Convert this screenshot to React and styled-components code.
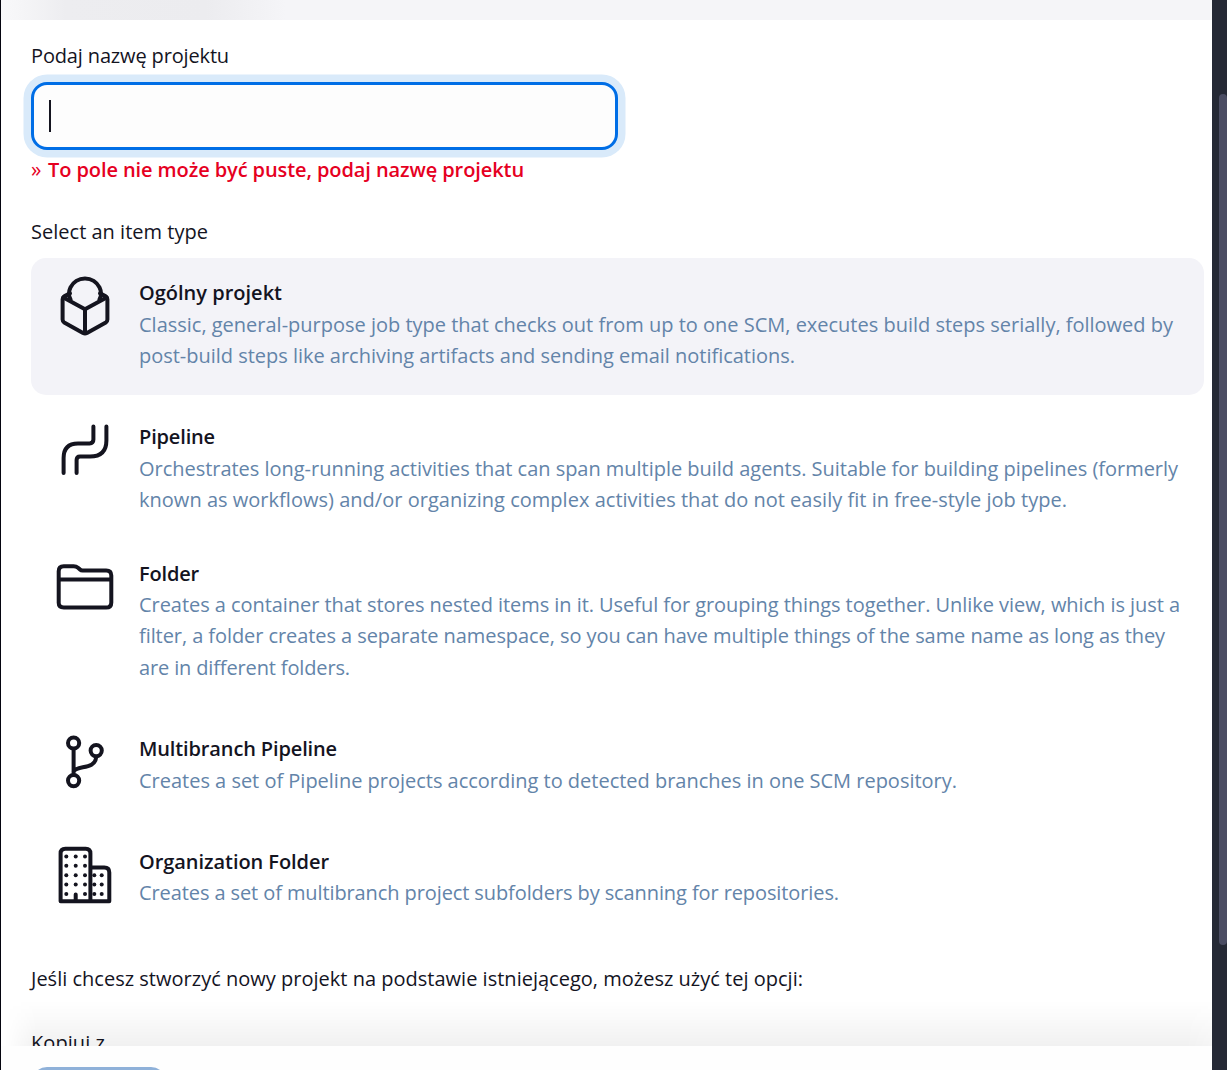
import React, { useLayoutEffect, useRef } from "react";
import styled, { createGlobalStyle } from "styled-components";

const Global = createGlobalStyle`
  * { box-sizing: border-box; }
  body { margin: 0; background: #252935; overflow: hidden; }
`;

const Window = styled.div`
  display: flex;
  width: 1227px;
  height: 1070px;
  overflow: hidden;
  background: #252935;
  font-family: "Open Sans", "Noto Sans", sans-serif;
  font-size: 20px;
  line-height: 31.3px;
  color: #14141f;
`;

const Page = styled.div`
  display: flex;
  flex-direction: column;
  width: 1212px;
  height: 1070px;
  border-left: 1px solid #05050f;
  background: #fff;
`;

const Header = styled.div`
  flex: none;
  height: 20px;
  background: linear-gradient(90deg, #f8f8fa 0, #f5f5f7 22px, #ededf0 65px, #ececef 205px, #f0f0f3 240px, #f5f5f8 285px);
`;

const Body = styled.main`
  position: relative;
  flex: none;
  display: flex;
  flex-direction: column;
  height: 1026px;
  padding: 20px 8px 0 30px;
  overflow: hidden;
`;

const Line = styled.span`
  display: block;
  width: max-content;
  white-space: pre;
`;

const Label = styled.div`
  flex: none;
  height: 31px;
  margin-top: ${(p) => p.$before || 0}px;
  margin-bottom: ${(p) => p.$after || 0}px;
`;

const NameField = styled.div`
  flex: none;
  display: flex;
  align-items: center;
  width: 587px;
  height: 68px;
  padding-left: 15px;
  border: 3px solid #006ee6;
  border-radius: 16px;
  background: #fdfdfd;
  box-shadow: 0 0 0 7.5px #d9eafa;
`;

const Caret = styled.i`
  width: 2px;
  height: 32px;
  background: #14141f;
`;

const ErrorText = styled.div`
  flex: none;
  display: flex;
  height: 31px;
  margin: 4px 0 31px;
  font-weight: 600;
  color: #e6001f;
`;

const Marker = styled.span`
  width: 17px;
  font-size: 21px;
  font-weight: 400;
`;

const Items = styled.ul`
  flex: none;
  display: flex;
  flex-direction: column;
  margin: 0;
  padding: 0;
  list-style: none;
`;

const Item = styled.li`
  display: flex;
  height: ${(p) => p.$height}px;
  margin-bottom: ${(p) => (p.$selected ? 7 : 0)}px;
  padding-top: 19px;
  border-radius: 15px;
  background: ${(p) => (p.$selected ? "#f3f3f8" : "transparent")};
`;

const IconBox = styled.div`
  flex: none;
  width: 108px;
  margin-top: -2px;
  padding-left: 23px;
  svg { display: block; overflow: visible; }
`;

const Title = styled.div`
  height: ${(p) => p.$height}px;
  font-weight: 600;
`;

const Description = styled.div`
  color: #6384a9;
`;

const BottomShade = styled.div`
  position: absolute;
  left: 0;
  right: 0;
  bottom: 0;
  height: 46px;
  background: linear-gradient(rgba(0, 0, 0, 0), rgba(0, 0, 0, 0.02) 40%, rgba(0, 0, 0, 0.055));
  mask-image: linear-gradient(90deg, transparent 4px, #000 36px, #000 1185px, rgba(0, 0, 0, 0.7));
`;

const Footer = styled.div`
  flex: 1;
  padding: 21px 0 0 31px;
  overflow: hidden;
  background: #fefefe;
`;

const OkButton = styled.div`
  width: 134px;
  height: 46px;
  border-radius: 15px;
  background: #8fb1d9;
`;

const Gutter = styled.div`
  display: flex;
  justify-content: flex-end;
  width: 15px;
  padding-top: 94px;
`;

const Thumb = styled.div`
  width: 8px;
  height: 851px;
  border-radius: 4px;
  background: #4b4d63;
`;

const Svg = ({ children }) => (
  <svg width="62" height="62" viewBox="0 0 62 62" fill="none" stroke="#14141f" strokeWidth="4" strokeLinecap="round" strokeLinejoin="round">
    {children}
  </svg>
);

const dots = [];
[12.3, 21.7, 31].forEach((x) =>
  [12.4, 21.8, 31.2, 40.6, 50].forEach((y) => {
    if (!(x === 21.7 && y === 50)) dots.push([x, y]);
  })
);
[40.3, 47.7].forEach((x) => [31.2, 40.6, 50].forEach((y) => dots.push([x, y])));

const icons = {
  project: (
    <Svg>
      <path d="M16 18.4L10.2 21.4Q8.6 22.4 8.6 24.3V44.6Q8.6 46.5 10.2 47.5L29 57.9Q31 58.9 33 57.9L51.8 47.5Q53.4 46.5 53.4 44.6V24.3Q53.4 22.4 51.8 21.4L46 18.4" />
      <path d="M9.4 22.4L31 34.3L52.6 22.4M31 34.3V58" />
      <path d="M16.6 24.5C14.5 21 14.6 16.4 16.5 12.4C19.1 7 24.7 3.4 31 3.4S42.9 7 45.5 12.4C47.4 16.4 47.5 21 45.4 24.5" />
    </Svg>
  ),
  pipeline: (
    <Svg>
      <path d="M39.4 7.4V20.6Q39.4 24.4 35.6 24.4H24Q9.6 24.4 9.6 39V54M52.4 7.4V21.4Q52.4 37.4 36 37.4H26Q22.6 37.4 22.6 41V54" />
    </Svg>
  ),
  folder: (
    <Svg>
      <path d="M4.7 46.8V15.3Q4.7 10.3 9.7 10.3H19.6Q22.2 10.3 24 11.8L25.9 13.4Q27 14.4 28.6 14.4H52.2Q57.3 14.4 57.3 19.5V46.4Q57.3 51.5 52.2 51.5H9.8Q4.7 51.5 4.7 46.8M5 23.4H57" />
    </Svg>
  ),
  branch: (
    <Svg>
      <circle cx="19.6" cy="12" r="5.6" />
      <circle cx="42.2" cy="19.6" r="5.6" />
      <circle cx="19.6" cy="49.6" r="5.6" />
      <path d="M19.6 18V43M19.6 40.5C22.5 33.5 41 39.5 42.2 26" />
    </Svg>
  ),
  organization: (
    <Svg>
      <path d="M36.4 57.3H6.6V9.4Q6.6 4.7 11.4 4.7H31.7Q36.4 4.7 36.4 9.4V57.3H55.3V28.5Q55.3 23.6 50.3 23.6H37M21.7 50.4V57" />
      {dots.map(([x, y]) => (
        <circle key={`${x}-${y}`} cx={x} cy={y} r="2" fill="#14141f" stroke="none" />
      ))}
    </Svg>
  ),
};

const items = [
  { icon: "project", height: 137, selected: true, title: ["Ogólny projekt", 143], lines: [
    ["Classic, general-purpose job type that checks out from up to one SCM, executes build steps serially, followed by", 1034],
    ["post-build steps like archiving artifacts and sending email notifications.", 656]] },
  { icon: "pipeline", height: 137, title: ["Pipeline", 76], lines: [
    ["Orchestrates long-running activities that can span multiple build agents. Suitable for building pipelines (formerly", 1039],
    ["known as workflows) and/or organizing complex activities that do not easily fit in free-style job type.", 928]] },
  { icon: "folder", height: 175, titleHeight: 31, title: ["Folder", 60], lines: [
    ["Creates a container that stores nested items in it. Useful for grouping things together. Unlike view, which is just a", 1041],
    ["filter, a folder creates a separate namespace, so you can have multiple things of the same name as long as they", 1026],
    ["are in different folders.", 211]] },
  { icon: "branch", height: 113, title: ["Multibranch Pipeline", 198], lines: [
    ["Creates a set of Pipeline projects according to detected branches in one SCM repository.", 818]] },
  { icon: "organization", height: 113, titleHeight: 31, title: ["Organization Folder", 190], lines: [
    ["Creates a set of multibranch project subfolders by scanning for repositories.", 700]] },
];

// Tracks a line so that it fills its measure exactly.
function Fit({ text, width }) {
  const ref = useRef(null);
  useLayoutEffect(() => {
    const el = ref.current;
    el.style.letterSpacing = "0px";
    const natural = el.getBoundingClientRect().width;
    el.style.letterSpacing = `${(width - natural) / text.length}px`;
  }, [text, width]);
  return <Line ref={ref}>{text}</Line>;
}

export default function App() {
  return (
    <Window>
      <Global />
      <Page>
        <Header />
        <Body>
          <Label $after={11}><Fit text="Podaj nazwę projektu" width={198} /></Label>
          <NameField><Caret /></NameField>
          <ErrorText>
            <Marker>»</Marker>
            <Fit text="To pole nie może być puste, podaj nazwę projektu" width={476} />
          </ErrorText>
          <Label $after={11}><Fit text="Select an item type" width={177} /></Label>
          <Items>
            {items.map((it) => (
              <Item key={it.icon} $height={it.height} $selected={it.selected}>
                <IconBox>{icons[it.icon]}</IconBox>
                <div>
                  <Title $height={it.titleHeight || 32}><Fit text={it.title[0]} width={it.title[1]} /></Title>
                  <Description>
                    {it.lines.map(([t, w]) => <Fit key={t} text={t} width={w} />)}
                  </Description>
                </div>
              </Item>
            ))}
          </Items>
          <Label $before={23} $after={33}>
            <Fit text="Jeśli chcesz stworzyć nowy projekt na podstawie istniejącego, możesz użyć tej opcji:" width={772} />
          </Label>
          <Label><Fit text="Kopiuj z" width={74} /></Label>
          <BottomShade />
        </Body>
        <Footer><OkButton /></Footer>
      </Page>
      <Gutter><Thumb /></Gutter>
    </Window>
  );
}
